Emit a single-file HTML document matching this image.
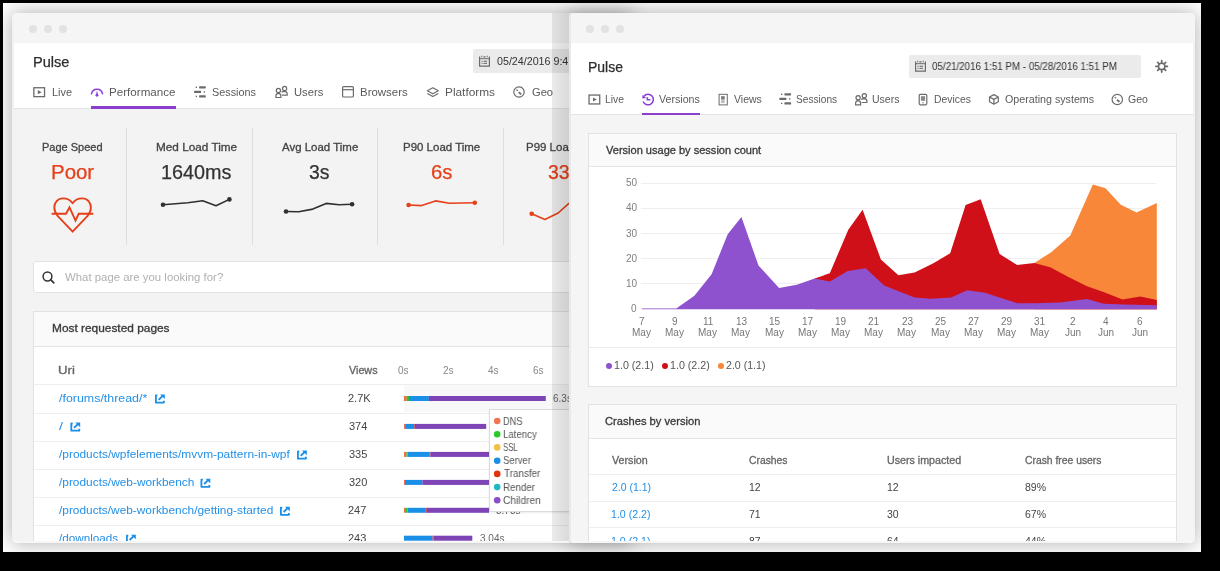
<!DOCTYPE html><html><head><meta charset="utf-8"><style>
html,body{margin:0;padding:0}
body{width:1220px;height:571px;overflow:hidden;background:#000;position:relative;font-family:"Liberation Sans",sans-serif}
.a{position:absolute;box-sizing:border-box}
.t{position:absolute;white-space:nowrap;transform-origin:0 0;will-change:transform}
.win{position:absolute;overflow:hidden;border-radius:5px;box-shadow:0 0 20px 1px rgba(0,0,0,.3)}
.dot{width:8px;height:8px;border-radius:50%;background:#e2e2e2}
.ext{width:10px;height:10px;border:1.5px solid #2a8be0;border-radius:1px}
</style></head><body>
<div class="a" style="left:3px;top:3px;width:1198px;height:549px;background:#fff"></div>
<div class="win" style="left:12px;top:13px;width:620px;height:530px;"><div class="a" style="left:-12px;top:-13px;width:1220px;height:571px"><div class="a" style="left:12px;top:13px;width:620px;height:30px;background:#f5f5f5"></div><div class="a dot" style="left:29px;top:25px"></div><div class="a dot" style="left:44px;top:25px"></div><div class="a dot" style="left:59px;top:25px"></div><div class="a" style="left:12px;top:43px;width:620px;height:65px;background:#fff"></div><div class="a" style="left:12px;top:108px;width:620px;height:1px;background:#e4e4e4"></div><div class="a" style="left:12px;top:109px;width:620px;height:433px;background:#f3f3f3"></div><div class="a" style="left:12px;top:13px;width:2px;height:530px;background:#f2f2f2"></div><div class="t" style="left:32.93px;top:54.75px;font-size:14px;line-height:14px;color:#2d2d2d;transform:scaleX(1.0414);-webkit-text-stroke:0.25px #2d2d2d;">Pulse</div><div class="t" style="left:51.53px;top:87.11px;font-size:10.5px;line-height:10.5px;color:#5a5a5a;transform:scaleX(1.0415);">Live</div><div class="t" style="left:108.57px;top:87.11px;font-size:10.5px;line-height:10.5px;color:#5a5a5a;transform:scaleX(1.1071);">Performance</div><div class="t" style="left:212.46px;top:87.11px;font-size:10.5px;line-height:10.5px;color:#5a5a5a;transform:scaleX(1.0315);">Sessions</div><div class="t" style="left:293.70px;top:87.11px;font-size:10.5px;line-height:10.5px;color:#5a5a5a;transform:scaleX(1.0671);">Users</div><div class="t" style="left:359.68px;top:87.11px;font-size:10.5px;line-height:10.5px;color:#5a5a5a;transform:scaleX(1.0911);">Browsers</div><div class="t" style="left:444.55px;top:87.11px;font-size:10.5px;line-height:10.5px;color:#5a5a5a;transform:scaleX(1.1266);">Platforms</div><div class="t" style="left:531.64px;top:87.11px;font-size:10.5px;line-height:10.5px;color:#5a5a5a;transform:scaleX(1.0582);">Geo</div><div class="a" style="left:91px;top:106px;width:85px;height:3px;background:#8a3fcf"></div><div class="a" style="left:473px;top:49px;width:200px;height:24px;background:#ebebeb;border-radius:2px"></div><div class="t" style="left:496.87px;top:55.54px;font-size:10.7px;line-height:10.7px;color:#333;">05/24/2016 9:47 AM - 05/31/2016 9:47 AM</div><svg class="a" style="left:0;top:0" width="1220" height="571"><rect x="33.85" y="87.75" width="10.7" height="8.9" fill="none" stroke="#6b6b6b" stroke-width="1.3"/><path d="M37.800000000000004 90.1 L41.6 92.19999999999999 L37.800000000000004 94.3 Z" fill="#6b6b6b"/><path d="M91.5 93.8 A5.6 5.6 0 0 1 102.5 93.8" fill="none" stroke="#8a3fd6" stroke-width="1.5" stroke-linecap="round"/><path d="M96.65 91.6 L97.35 91.6 L97.8 94.4 L96.2 94.4 Z" fill="#8a3fd6"/><circle cx="97" cy="95.3" r="1.45" fill="#8a3fd6"/><rect x="195.7" y="86.6" width="1.3" height="1.4" fill="#6b6b6b"/><rect x="199.1" y="86.19999999999999" width="6.7" height="2.2" rx="0.6" fill="#6b6b6b"/><rect x="194.1" y="90.8" width="7" height="2.2" rx="0.6" fill="#6b6b6b"/><rect x="203.7" y="91.19999999999999" width="1.3" height="1.4" fill="#6b6b6b"/><rect x="195.7" y="95.69999999999999" width="1.3" height="1.4" fill="#6b6b6b"/><rect x="199.1" y="95.3" width="6.7" height="2.2" rx="0.6" fill="#6b6b6b"/><circle cx="278.40000000000003" cy="90.39999999999999" r="2.1" fill="none" stroke="#6b6b6b" stroke-width="1.2"/><path d="M275.90000000000003 97.5 L275.90000000000003 95.69999999999999 Q276.1 93.39999999999999 278.40000000000003 93.3 Q280.7 93.39999999999999 280.90000000000003 95.69999999999999 L280.90000000000003 97.5 Z" fill="none" stroke="#6b6b6b" stroke-width="1.2"/><circle cx="284.6" cy="88.39999999999999" r="2.1" fill="none" stroke="#6b6b6b" stroke-width="1.2"/><path d="M281.5 92.1 Q282.2 91.3 284.6 91.3 Q287.1 91.39999999999999 287.2 93.69999999999999 L287.2 95.1 L281.90000000000003 95.1" fill="none" stroke="#6b6b6b" stroke-width="1.2"/><rect x="342.6" y="86.69999999999999" width="10.8" height="10.3" rx="1" fill="none" stroke="#6b6b6b" stroke-width="1.2"/><path d="M342.6 89.69999999999999 H353.4" stroke="#6b6b6b" stroke-width="1.2"/><path d="M432.8 87.8 L438.3 90.8 L432.8 93.8 L427.3 90.8 Z" fill="none" stroke="#6b6b6b" stroke-width="1.2" stroke-linejoin="round"/><path d="M427.3 93.5 L432.8 96.5 L438.3 93.5" fill="none" stroke="#6b6b6b" stroke-width="1.2" stroke-linejoin="round"/><circle cx="519" cy="92" r="5.2" fill="none" stroke="#6b6b6b" stroke-width="1.2"/><path d="M516.4 89.8 L517.8 90.8" stroke="#6b6b6b" stroke-width="1.3"/><path d="M518.7 92.2 L521.2 94.4" stroke="#6b6b6b" stroke-width="1.8"/><path d="M479.6 56.5 V66.1 H489.4 V56.5" fill="none" stroke="#6b6b6b" stroke-width="1.2"/><path d="M479.6 58.7 H489.4" stroke="#6b6b6b" stroke-width="1"/><rect x="481.3" y="55.7" width="1" height="1.6" fill="#6b6b6b"/><rect x="486.7" y="55.7" width="1" height="1.6" fill="#6b6b6b"/><rect x="483.4" y="56.3" width="2.2" height="1.2" fill="#6b6b6b"/><rect x="481.5" y="60.7" width="1.1" height="1.1" fill="#6b6b6b"/><rect x="483.5" y="60.7" width="3.6" height="1.1" fill="#6b6b6b"/><rect x="481.5" y="62.8" width="1.1" height="1.1" fill="#6b6b6b"/><rect x="483.5" y="62.8" width="3.6" height="1.1" fill="#6b6b6b"/></svg><div class="t" style="left:42.12px;top:141.76px;font-size:10.8px;line-height:10.8px;color:#444;transform:scaleX(1.0192);-webkit-text-stroke:0.3px #444;">Page Speed</div><div class="t" style="left:50.71px;top:162.88px;font-size:19.4px;line-height:19.4px;color:#e5401a;transform:scaleX(1.0539);-webkit-text-stroke:0.25px #e5401a;">Poor</div><div class="t" style="left:155.51px;top:141.76px;font-size:10.8px;line-height:10.8px;color:#444;transform:scaleX(1.0900);-webkit-text-stroke:0.3px #444;">Med Load Time</div><div class="t" style="left:160.81px;top:162.88px;font-size:19.4px;line-height:19.4px;color:#333;transform:scaleX(1.0219);-webkit-text-stroke:0.25px #333;">1640ms</div><div class="t" style="left:281.60px;top:141.76px;font-size:10.8px;line-height:10.8px;color:#444;transform:scaleX(1.0618);-webkit-text-stroke:0.3px #444;">Avg Load Time</div><div class="t" style="left:309.22px;top:162.88px;font-size:19.4px;line-height:19.4px;color:#333;-webkit-text-stroke:0.25px #333;">3s</div><div class="t" style="left:402.68px;top:141.76px;font-size:10.8px;line-height:10.8px;color:#444;transform:scaleX(1.0634);-webkit-text-stroke:0.3px #444;">P90 Load Time</div><div class="t" style="left:430.73px;top:162.88px;font-size:19.4px;line-height:19.4px;color:#e5401a;transform:scaleX(1.0469);-webkit-text-stroke:0.25px #e5401a;">6s</div><div class="t" style="left:526.08px;top:141.76px;font-size:10.8px;line-height:10.8px;color:#444;transform:scaleX(1.0634);-webkit-text-stroke:0.3px #444;">P99 Load Time</div><div class="t" style="left:548.22px;top:162.88px;font-size:19.4px;line-height:19.4px;color:#e5401a;-webkit-text-stroke:0.25px #e5401a;">33s</div><div class="a" style="left:126px;top:128px;width:1px;height:117px;background:#dedede"></div><div class="a" style="left:252px;top:128px;width:1px;height:117px;background:#dedede"></div><div class="a" style="left:377px;top:128px;width:1px;height:117px;background:#dedede"></div><div class="a" style="left:503px;top:128px;width:1px;height:117px;background:#dedede"></div><div class="a" style="left:33px;top:261px;width:600px;height:32px;background:#fff;border:1px solid #e2e2e2;border-radius:3px"></div><div class="t" style="left:65.00px;top:272.31px;font-size:10.5px;line-height:10.5px;color:#b0b0b0;transform:scaleX(1.0843);">What page are you looking for?</div><svg class="a" style="left:0;top:0" width="1220" height="571"><circle cx="47.5" cy="276.5" r="4.4" fill="none" stroke="#333" stroke-width="1.5"/><path d="M50.7 279.7 L53.8 282.8" stroke="#333" stroke-width="1.7" stroke-linecap="round"/></svg><div class="a" style="left:33px;top:311px;width:600px;height:240px;background:#fff;border:1px solid #e2e2e2"></div><div class="a" style="left:34px;top:312px;width:599px;height:34px;background:#fafafa"></div><div class="a" style="left:34px;top:346px;width:599px;height:1px;background:#e4e4e4"></div><div class="t" style="left:51.85px;top:324.48px;font-size:10.3px;line-height:10.3px;color:#3a3a3a;transform:scaleX(1.1537);-webkit-text-stroke:0.3px #3a3a3a;">Most requested pages</div><div class="t" style="left:57.95px;top:365.54px;font-size:10px;line-height:10px;color:#666;transform:scaleX(1.3158);-webkit-text-stroke:0.3px #666;">Uri</div><div class="t" style="left:348.89px;top:365.54px;font-size:10px;line-height:10px;color:#666;transform:scaleX(1.0769);-webkit-text-stroke:0.3px #666;">Views</div><div class="t" style="left:398.40px;top:365.54px;font-size:10px;line-height:10px;color:#888;">0s</div><div class="t" style="left:443.30px;top:365.54px;font-size:10px;line-height:10px;color:#888;">2s</div><div class="t" style="left:487.80px;top:365.54px;font-size:10px;line-height:10px;color:#888;">4s</div><div class="t" style="left:532.50px;top:365.54px;font-size:10px;line-height:10px;color:#888;">6s</div><div class="a" style="left:34px;top:384px;width:599px;height:1px;background:#eeeeee"></div><div class="t" style="left:59.00px;top:393.29px;font-size:11px;line-height:11px;color:#2490e6;transform:scaleX(1.1283);">/forums/thread/*</div><div class="t" style="left:348.45px;top:393.29px;font-size:11px;line-height:11px;color:#444;">2.7K</div><svg class="a" style="left:0;top:0" width="1220" height="571"><path d="M157.3 395.4 H155.9 V402.6 H163.9 V400.7" fill="none" stroke="#1a8fe8" stroke-width="1.8" stroke-linejoin="round"/><path d="M158.6 399.8 L162.6 395.9" stroke="#1a8fe8" stroke-width="1.8"/><path d="M160 394.5 H164.8 V399.1 Z" fill="#1a8fe8"/></svg><div class="a" style="left:34px;top:413px;width:599px;height:1px;background:#efefef"></div><div class="t" style="left:59.00px;top:421.39px;font-size:11px;line-height:11px;color:#2490e6;transform:scaleX(1.2987);">/</div><div class="t" style="left:348.56px;top:421.39px;font-size:11px;line-height:11px;color:#444;">374</div><svg class="a" style="left:0;top:0" width="1220" height="571"><path d="M72.7 423.49999999999994 H71.30000000000001 V430.7 H79.30000000000001 V428.79999999999995" fill="none" stroke="#1a8fe8" stroke-width="1.8" stroke-linejoin="round"/><path d="M74.0 427.9 L78.0 423.99999999999994" stroke="#1a8fe8" stroke-width="1.8"/><path d="M75.4 422.59999999999997 H80.2 V427.2 Z" fill="#1a8fe8"/></svg><div class="a" style="left:34px;top:441px;width:599px;height:1px;background:#efefef"></div><div class="t" style="left:59.00px;top:449.39px;font-size:11px;line-height:11px;color:#2490e6;transform:scaleX(1.0815);">/products/wpfelements/mvvm-pattern-in-wpf</div><div class="t" style="left:348.56px;top:449.39px;font-size:11px;line-height:11px;color:#444;">335</div><svg class="a" style="left:0;top:0" width="1220" height="571"><path d="M299.3 451.49999999999994 H297.9 V458.7 H305.9 V456.79999999999995" fill="none" stroke="#1a8fe8" stroke-width="1.8" stroke-linejoin="round"/><path d="M300.6 455.9 L304.6 451.99999999999994" stroke="#1a8fe8" stroke-width="1.8"/><path d="M302 450.59999999999997 H306.8 V455.2 Z" fill="#1a8fe8"/></svg><div class="a" style="left:34px;top:469px;width:599px;height:1px;background:#efefef"></div><div class="t" style="left:59.00px;top:477.49px;font-size:11px;line-height:11px;color:#2490e6;transform:scaleX(1.0800);">/products/web-workbench</div><div class="t" style="left:348.56px;top:477.49px;font-size:11px;line-height:11px;color:#444;">320</div><svg class="a" style="left:0;top:0" width="1220" height="571"><path d="M202.8 479.59999999999997 H201.4 V486.8 H209.4 V484.9" fill="none" stroke="#1a8fe8" stroke-width="1.8" stroke-linejoin="round"/><path d="M204.1 484.0 L208.1 480.09999999999997" stroke="#1a8fe8" stroke-width="1.8"/><path d="M205.5 478.7 H210.3 V483.3 Z" fill="#1a8fe8"/></svg><div class="a" style="left:34px;top:497px;width:599px;height:1px;background:#efefef"></div><div class="t" style="left:59.00px;top:505.49px;font-size:11px;line-height:11px;color:#2490e6;transform:scaleX(1.0783);">/products/web-workbench/getting-started</div><div class="t" style="left:348.45px;top:505.49px;font-size:11px;line-height:11px;color:#444;">247</div><svg class="a" style="left:0;top:0" width="1220" height="571"><path d="M282.3 507.59999999999997 H280.9 V514.8 H288.9 V512.9" fill="none" stroke="#1a8fe8" stroke-width="1.8" stroke-linejoin="round"/><path d="M283.6 512.0 L287.6 508.09999999999997" stroke="#1a8fe8" stroke-width="1.8"/><path d="M285 506.7 H289.8 V511.3 Z" fill="#1a8fe8"/></svg><div class="a" style="left:34px;top:525px;width:599px;height:1px;background:#efefef"></div><div class="t" style="left:59.00px;top:533.49px;font-size:11px;line-height:11px;color:#2490e6;transform:scaleX(1.0630);">/downloads</div><div class="t" style="left:348.45px;top:533.49px;font-size:11px;line-height:11px;color:#444;">243</div><svg class="a" style="left:0;top:0" width="1220" height="571"><path d="M128.3 535.6 H126.9 V542.8000000000001 H134.9 V540.9000000000001" fill="none" stroke="#1a8fe8" stroke-width="1.8" stroke-linejoin="round"/><path d="M129.6 540.0 L133.6 536.1" stroke="#1a8fe8" stroke-width="1.8"/><path d="M131 534.7 H135.8 V539.3000000000001 Z" fill="#1a8fe8"/></svg><div class="a" style="left:404px;top:385px;width:229px;height:27px;background:#f8f8f8"></div><svg class="a" style="left:0;top:0" width="1220" height="571"><path d="M72.6 203.3 C70 199.6 66.6 198.4 63 198.4 C57.6 198.4 54.3 202.6 54.3 207.6 C54.3 211 55.6 213.6 57.6 215.9 L72.6 231.7 L87.6 215.9 C89.6 213.6 90.9 211 90.9 207.6 C90.9 202.6 87.6 198.4 82.2 198.4 C78.6 198.4 75.2 199.6 72.6 203.3 Z" fill="none" stroke="#e5401a" stroke-width="1.9" stroke-linejoin="round"/><path d="M51.6 213.8 H66 L69.5 207.3 L75.5 220.6 L78.7 213.8 H93.3" fill="none" stroke="#e5401a" stroke-width="1.9" stroke-linejoin="miter"/></svg><svg class="a" style="left:0;top:0" width="1220" height="571"><polyline points="163,204.8 187.8,202.8 202.7,200.7 216,205.7 229.4,199.4" fill="none" stroke="#2f2f2f" stroke-width="1.6" stroke-linejoin="round"/><circle cx="163" cy="204.8" r="2.3" fill="#2f2f2f"/><circle cx="229.4" cy="199.4" r="2.3" fill="#2f2f2f"/><polyline points="286,211.5 298.7,211.7 312.8,209.1 326.2,203.4 339,204.7 352.1,204.2" fill="none" stroke="#2f2f2f" stroke-width="1.6" stroke-linejoin="round"/><circle cx="286" cy="211.5" r="2.3" fill="#2f2f2f"/><circle cx="352.1" cy="204.2" r="2.3" fill="#2f2f2f"/><polyline points="408.6,205 421.6,205.6 435.5,200.9 449.5,203.2 474.8,202.8" fill="none" stroke="#e5401a" stroke-width="1.6" stroke-linejoin="round"/><circle cx="408.6" cy="205" r="2.3" fill="#e5401a"/><circle cx="474.8" cy="202.8" r="2.3" fill="#e5401a"/><polyline points="531.7,213.7 544.9,219.5 558.2,213 568.6,203.7 580,196" fill="none" stroke="#e5401a" stroke-width="1.6" stroke-linejoin="round"/><circle cx="531.7" cy="213.7" r="2.3" fill="#e5401a"/></svg><svg class="a" style="left:0;top:0" width="1220" height="571"><rect x="403.9" y="396.0" width="2.9" height="5" fill="#f06d4c"/><rect x="406.8" y="396.0" width="2.2" height="5" fill="#22cc22"/><rect x="409" y="396.0" width="19.9" height="5" fill="#1a8fe8"/><rect x="428.9" y="396.0" width="1.1" height="5" fill="#d8282c"/><rect x="430" y="396.0" width="115.8" height="5" fill="#7c44b4"/><rect x="404" y="423.9" width="1.0" height="5" fill="#f06d4c"/><rect x="405" y="423.9" width="1.0" height="5" fill="#22cc22"/><rect x="406" y="423.9" width="8.4" height="5" fill="#1a8fe8"/><rect x="414.4" y="423.9" width="1.6" height="5" fill="#d8282c"/><rect x="416" y="423.9" width="70.2" height="5" fill="#7c44b4"/><rect x="404" y="451.9" width="2.5" height="5" fill="#f06d4c"/><rect x="406.5" y="451.9" width="1.0" height="5" fill="#22cc22"/><rect x="407.5" y="451.9" width="21.9" height="5" fill="#1a8fe8"/><rect x="429.4" y="451.9" width="1.1" height="5" fill="#d8282c"/><rect x="430.5" y="451.9" width="129.5" height="5" fill="#7c44b4"/><rect x="404" y="479.9" width="1.0" height="5" fill="#f06d4c"/><rect x="405" y="479.9" width="17.4" height="5" fill="#1a8fe8"/><rect x="422.4" y="479.9" width="137.6" height="5" fill="#7c44b4"/><rect x="404" y="507.8" width="2.0" height="5" fill="#f06d4c"/><rect x="406" y="507.8" width="1.5" height="5" fill="#22cc22"/><rect x="407.5" y="507.8" width="18.3" height="5" fill="#1a8fe8"/><rect x="425.8" y="507.8" width="1.0" height="5" fill="#d8282c"/><rect x="426.8" y="507.8" width="62.2" height="5" fill="#7c44b4"/><rect x="404" y="535.7" width="28.6" height="5" fill="#1a8fe8"/><rect x="432.6" y="535.7" width="0.9" height="5" fill="#d8282c"/><rect x="433.5" y="535.7" width="38.8" height="5" fill="#7c44b4"/></svg><div class="t" style="left:553.10px;top:393.54px;font-size:10px;line-height:10px;color:#666;">6.3s</div><div class="t" style="left:495.60px;top:505.74px;font-size:10px;line-height:10px;color:#666;">3.78s</div><div class="t" style="left:479.60px;top:533.53px;font-size:10px;line-height:10px;color:#666;">3.04s</div><div class="a" style="left:489px;top:409px;width:90px;height:103px;background:#fff;border:1px solid #dcdcdc;box-shadow:0 1px 2px rgba(0,0,0,.08)"></div><div class="t" style="left:502.96px;top:416.60px;font-size:10.4px;line-height:10.4px;color:#555;transform:scaleX(0.8887);">DNS</div><div class="t" style="left:502.93px;top:429.82px;font-size:10.4px;line-height:10.4px;color:#555;transform:scaleX(0.9278);">Latency</div><div class="t" style="left:503.31px;top:443.04px;font-size:10.4px;line-height:10.4px;color:#555;transform:scaleX(0.7479);">SSL</div><div class="t" style="left:503.23px;top:456.26px;font-size:10.4px;line-height:10.4px;color:#555;transform:scaleX(0.9115);">Server</div><div class="t" style="left:503.50px;top:469.48px;font-size:10.4px;line-height:10.4px;color:#555;transform:scaleX(0.9510);">Transfer</div><div class="t" style="left:502.92px;top:482.70px;font-size:10.4px;line-height:10.4px;color:#555;transform:scaleX(0.9435);">Render</div><div class="t" style="left:503.19px;top:495.92px;font-size:10.4px;line-height:10.4px;color:#555;transform:scaleX(0.9749);">Children</div><svg class="a" style="left:0;top:0" width="1220" height="571"><circle cx="497.2" cy="421.0" r="3.3" fill="#f07850"/><circle cx="497.2" cy="434.2" r="3.3" fill="#2cc82c"/><circle cx="497.2" cy="447.4" r="3.3" fill="#f2c044"/><circle cx="497.2" cy="460.7" r="3.3" fill="#1a8fe8"/><circle cx="497.2" cy="473.9" r="3.3" fill="#e2330e"/><circle cx="497.2" cy="487.1" r="3.3" fill="#1fb8c8"/><circle cx="497.2" cy="500.3" r="3.3" fill="#8a4cc8"/></svg><div class="a" style="left:12px;top:541px;width:620px;height:2px;background:#f6f6f6"></div></div></div><div class="a" style="left:552px;top:13px;width:17px;height:528px;background:linear-gradient(to right,rgba(0,0,0,.08),rgba(0,0,0,.145))"></div><div class="win" style="left:569px;top:13px;width:626px;height:530px;clip-path:polygon(-20px -40px,calc(100% + 40px) -40px,calc(100% + 40px) calc(100% + 40px),-20px calc(100% + 40px),-20px 100%,0 100%,0 0,-20px 0)"><div class="a" style="left:-569px;top:-13px;width:1220px;height:571px"><div class="a" style="left:569px;top:13px;width:626px;height:30px;background:#f5f5f5"></div><div class="a dot" style="left:586px;top:25px"></div><div class="a dot" style="left:601px;top:25px"></div><div class="a dot" style="left:616px;top:25px"></div><div class="a" style="left:569px;top:43px;width:626px;height:71px;background:#fff"></div><div class="a" style="left:569px;top:114px;width:626px;height:1px;background:#e4e4e4"></div><div class="a" style="left:569px;top:115px;width:626px;height:427px;background:#f5f5f5"></div><div class="a" style="left:569px;top:13px;width:2px;height:529px;background:#e9e9e9"></div><div class="a" style="left:1193px;top:43px;width:2px;height:500px;background:#f3f3f3"></div><div class="t" style="left:587.89px;top:60.35px;font-size:14px;line-height:14px;color:#2d2d2d;transform:scaleX(0.9904);-webkit-text-stroke:0.25px #2d2d2d;">Pulse</div><div class="t" style="left:605.27px;top:94.53px;font-size:10px;line-height:10px;color:#5a5a5a;transform:scaleX(1.0351);">Live</div><div class="t" style="left:659.39px;top:94.53px;font-size:10px;line-height:10px;color:#5a5a5a;transform:scaleX(1.0633);">Versions</div><div class="t" style="left:734.39px;top:94.53px;font-size:10px;line-height:10px;color:#5a5a5a;transform:scaleX(1.0500);">Views</div><div class="t" style="left:796.39px;top:94.53px;font-size:10px;line-height:10px;color:#5a5a5a;transform:scaleX(1.0126);">Sessions</div><div class="t" style="left:872.16px;top:94.53px;font-size:10px;line-height:10px;color:#5a5a5a;transform:scaleX(1.0522);">Users</div><div class="t" style="left:934.17px;top:94.53px;font-size:10px;line-height:10px;color:#5a5a5a;transform:scaleX(1.0349);">Devices</div><div class="t" style="left:1005.27px;top:94.53px;font-size:10px;line-height:10px;color:#5a5a5a;transform:scaleX(1.0691);">Operating systems</div><div class="t" style="left:1128.47px;top:94.53px;font-size:10px;line-height:10px;color:#5a5a5a;transform:scaleX(1.0556);">Geo</div><div class="a" style="left:642px;top:113px;width:58px;height:2px;background:#8a3fcf"></div><div class="a" style="left:909px;top:55px;width:232px;height:23px;background:#ebebeb;border-radius:2px"></div><div class="t" style="left:931.91px;top:62.13px;font-size:10px;line-height:10px;color:#333;transform:scaleX(0.9782);">05/21/2016 1:51 PM - 05/28/2016 1:51 PM</div><svg class="a" style="left:0;top:0" width="1220" height="571"><rect x="589.05" y="95.05000000000001" width="10.7" height="8.9" fill="none" stroke="#6b6b6b" stroke-width="1.3"/><path d="M593.0 97.4 L596.8 99.5 L593.0 101.60000000000001 Z" fill="#6b6b6b"/><path d="M643.0999999999999 101.4 A5.3 5.3 0 1 0 643.9 96.2" fill="none" stroke="#8a3fd6" stroke-width="1.5"/><path d="M642.4 94.9 L642.4 98.5 L646.1999999999999 97.9 Z" fill="#8a3fd6"/><path d="M647.3 97.3 V99.7 H650.4" fill="none" stroke="#8a3fd6" stroke-width="1.5"/><rect x="719.1" y="94.3" width="8.2" height="10.6" fill="none" stroke="#6b6b6b" stroke-width="1"/><rect x="721.1" y="96.2" width="3.6" height="3.4" fill="#777"/><rect x="721.1" y="100.2" width="3.6" height="2.9" fill="#bbb"/><rect x="781.0" y="93.6" width="1.3" height="1.4" fill="#6b6b6b"/><rect x="784.4" y="93.19999999999999" width="6.7" height="2.2" rx="0.6" fill="#6b6b6b"/><rect x="779.4" y="97.8" width="7" height="2.2" rx="0.6" fill="#6b6b6b"/><rect x="789.0" y="98.19999999999999" width="1.3" height="1.4" fill="#6b6b6b"/><rect x="781.0" y="102.69999999999999" width="1.3" height="1.4" fill="#6b6b6b"/><rect x="784.4" y="102.3" width="6.7" height="2.2" rx="0.6" fill="#6b6b6b"/><circle cx="858.1" cy="97.8" r="2.1" fill="none" stroke="#6b6b6b" stroke-width="1.2"/><path d="M855.6 104.9 L855.6 103.1 Q855.8 100.8 858.1 100.7 Q860.4 100.8 860.6 103.1 L860.6 104.9 Z" fill="none" stroke="#6b6b6b" stroke-width="1.2"/><circle cx="864.3" cy="95.8" r="2.1" fill="none" stroke="#6b6b6b" stroke-width="1.2"/><path d="M861.2 99.5 Q861.9 98.7 864.3 98.7 Q866.8 98.8 866.9 101.1 L866.9 102.5 L861.6 102.5" fill="none" stroke="#6b6b6b" stroke-width="1.2"/><rect x="919.2" y="94.39999999999999" width="7.6" height="10.4" rx="1.2" fill="none" stroke="#6b6b6b" stroke-width="1.2"/><rect x="920.9" y="96.2" width="4.2" height="4.6" fill="#888"/><rect x="922.3000000000001" y="102.3" width="1.4" height="1" fill="#6b6b6b"/><path d="M993.9 94.6 L998.3 97.0 L998.3 101.8 L993.9 104.2 L989.5 101.8 L989.5 97.0 Z M989.5 97.0 L993.9 99.39999999999999 L998.3 97.0 M993.9 99.39999999999999 V104.2" fill="none" stroke="#6b6b6b" stroke-width="1.2" stroke-linejoin="round"/><circle cx="1117.3" cy="99.5" r="5.2" fill="none" stroke="#6b6b6b" stroke-width="1.2"/><path d="M1114.7 97.3 L1116.1 98.3" stroke="#6b6b6b" stroke-width="1.3"/><path d="M1117.0 99.7 L1119.5 101.9" stroke="#6b6b6b" stroke-width="1.8"/><path d="M915.6 61.5 V71.1 H925.4 V61.5" fill="none" stroke="#6b6b6b" stroke-width="1.2"/><path d="M915.6 63.7 H925.4" stroke="#6b6b6b" stroke-width="1"/><rect x="917.3" y="60.7" width="1" height="1.6" fill="#6b6b6b"/><rect x="922.7" y="60.7" width="1" height="1.6" fill="#6b6b6b"/><rect x="919.4" y="61.3" width="2.2" height="1.2" fill="#6b6b6b"/><rect x="917.5" y="65.7" width="1.1" height="1.1" fill="#6b6b6b"/><rect x="919.5" y="65.7" width="3.6" height="1.1" fill="#6b6b6b"/><rect x="917.5" y="67.8" width="1.1" height="1.1" fill="#6b6b6b"/><rect x="919.5" y="67.8" width="3.6" height="1.1" fill="#6b6b6b"/><circle cx="1161.7" cy="66.4" r="3.2" fill="none" stroke="#6b6b6b" stroke-width="1.5"/><path d="M1165.10 66.40 L1167.40 66.40 M1164.10 68.80 L1165.73 70.43 M1161.70 69.80 L1161.70 72.10 M1159.30 68.80 L1157.67 70.43 M1158.30 66.40 L1156.00 66.40 M1159.30 64.00 L1157.67 62.37 M1161.70 63.00 L1161.70 60.70 M1164.10 64.00 L1165.73 62.37 " stroke="#6b6b6b" stroke-width="1.7" stroke-linecap="round"/></svg><div class="a" style="left:588px;top:133px;width:589px;height:254px;background:#fff;border:1px solid #e2e2e2"></div><div class="a" style="left:589px;top:134px;width:587px;height:32px;background:#fafafa"></div><div class="a" style="left:589px;top:166px;width:587px;height:1px;background:#e4e4e4"></div><div class="t" style="left:606.39px;top:144.61px;font-size:10.5px;line-height:10.5px;color:#3a3a3a;transform:scaleX(1.0507);-webkit-text-stroke:0.3px #3a3a3a;">Version usage by session count</div><div class="a" style="left:589px;top:347px;width:587px;height:1px;background:#ececec"></div><div class="a" style="left:641px;top:183px;width:515px;height:1px;background:#efefef"></div><div class="t" style="left:625.50px;top:178.33px;font-size:10px;line-height:10px;color:#808080;">50</div><div class="a" style="left:641px;top:208px;width:515px;height:1px;background:#efefef"></div><div class="t" style="left:625.50px;top:203.48px;font-size:10px;line-height:10px;color:#808080;">40</div><div class="a" style="left:641px;top:233px;width:515px;height:1px;background:#efefef"></div><div class="t" style="left:625.50px;top:228.63px;font-size:10px;line-height:10px;color:#808080;">30</div><div class="a" style="left:641px;top:258px;width:515px;height:1px;background:#efefef"></div><div class="t" style="left:625.50px;top:253.78px;font-size:10px;line-height:10px;color:#808080;">20</div><div class="a" style="left:641px;top:283px;width:515px;height:1px;background:#efefef"></div><div class="t" style="left:625.50px;top:278.94px;font-size:10px;line-height:10px;color:#808080;">10</div><div class="a" style="left:641px;top:308px;width:515px;height:1px;background:#efefef"></div><div class="t" style="left:631.10px;top:304.09px;font-size:10px;line-height:10px;color:#808080;">0</div><svg class="a" style="left:0;top:0" width="1220" height="571" viewBox="0 0 1220 571"><polygon fill="#f8873a" points="1034.3,262.9 1051.2,252.2 1070.3,235.5 1092.8,184.5 1105.5,188.3 1120.8,204.8 1136.5,212.4 1156.8,203.0 1156.8,309.2 1034.3,309.2"/><polygon fill="#cf1018" points="814.7,278.5 829.8,273.2 848.3,229.7 862.6,209.7 880.9,259.5 898.4,275.3 914.6,272.4 933.4,263.3 950.2,253.2 965.6,204.9 980.7,199.2 999.6,253.9 1017.1,265.0 1034.3,262.9 1050.2,267.3 1067.9,276.7 1087.0,286.3 1103.5,291.9 1122.5,299.5 1140.3,296.5 1156.8,300.0 1156.8,309.2 814.7,309.2"/><polygon fill="#8e52cf" points="642,309.2 642.0,308.4 676.3,308.4 694.4,295.7 711.6,274.2 727.7,234.3 741.4,217.1 758.5,265.5 779.1,288.1 796.8,284.8 814.7,278.5 829.8,281.6 847.7,271.1 865.8,268.2 884.1,285.4 914.6,297.6 930.3,298.7 951.3,297.4 967.1,290.2 984.9,292.8 1017.5,303.3 1034.3,303.3 1060.3,302.6 1087.0,299.0 1103.5,303.8 1123.8,304.6 1156.8,305.3 1156.8,309.2"/></svg><div class="t" style="left:639.10px;top:316.54px;font-size:10px;line-height:10px;color:#777;">7</div><div class="t" style="left:632.05px;top:327.54px;font-size:10px;line-height:10px;color:#777;">May</div><div class="t" style="left:672.00px;top:316.54px;font-size:10px;line-height:10px;color:#777;">9</div><div class="t" style="left:664.95px;top:327.54px;font-size:10px;line-height:10px;color:#777;">May</div><div class="t" style="left:702.65px;top:316.54px;font-size:10px;line-height:10px;color:#777;">11</div><div class="t" style="left:698.15px;top:327.54px;font-size:10px;line-height:10px;color:#777;">May</div><div class="t" style="left:735.55px;top:316.54px;font-size:10px;line-height:10px;color:#777;">13</div><div class="t" style="left:731.45px;top:327.54px;font-size:10px;line-height:10px;color:#777;">May</div><div class="t" style="left:768.80px;top:316.54px;font-size:10px;line-height:10px;color:#777;">15</div><div class="t" style="left:764.75px;top:327.54px;font-size:10px;line-height:10px;color:#777;">May</div><div class="t" style="left:802.25px;top:316.54px;font-size:10px;line-height:10px;color:#777;">17</div><div class="t" style="left:798.15px;top:327.54px;font-size:10px;line-height:10px;color:#777;">May</div><div class="t" style="left:835.25px;top:316.54px;font-size:10px;line-height:10px;color:#777;">19</div><div class="t" style="left:831.15px;top:327.54px;font-size:10px;line-height:10px;color:#777;">May</div><div class="t" style="left:868.10px;top:316.54px;font-size:10px;line-height:10px;color:#777;">21</div><div class="t" style="left:863.85px;top:327.54px;font-size:10px;line-height:10px;color:#777;">May</div><div class="t" style="left:901.70px;top:316.54px;font-size:10px;line-height:10px;color:#777;">23</div><div class="t" style="left:897.45px;top:327.54px;font-size:10px;line-height:10px;color:#777;">May</div><div class="t" style="left:934.85px;top:316.54px;font-size:10px;line-height:10px;color:#777;">25</div><div class="t" style="left:930.65px;top:327.54px;font-size:10px;line-height:10px;color:#777;">May</div><div class="t" style="left:968.00px;top:316.54px;font-size:10px;line-height:10px;color:#777;">27</div><div class="t" style="left:963.75px;top:327.54px;font-size:10px;line-height:10px;color:#777;">May</div><div class="t" style="left:1001.10px;top:316.54px;font-size:10px;line-height:10px;color:#777;">29</div><div class="t" style="left:996.85px;top:327.54px;font-size:10px;line-height:10px;color:#777;">May</div><div class="t" style="left:1034.45px;top:316.54px;font-size:10px;line-height:10px;color:#777;">31</div><div class="t" style="left:1030.15px;top:327.54px;font-size:10px;line-height:10px;color:#777;">May</div><div class="t" style="left:1070.20px;top:316.54px;font-size:10px;line-height:10px;color:#777;">2</div><div class="t" style="left:1065.15px;top:327.54px;font-size:10px;line-height:10px;color:#777;">Jun</div><div class="t" style="left:1103.45px;top:316.54px;font-size:10px;line-height:10px;color:#777;">4</div><div class="t" style="left:1098.35px;top:327.54px;font-size:10px;line-height:10px;color:#777;">Jun</div><div class="t" style="left:1136.70px;top:316.54px;font-size:10px;line-height:10px;color:#777;">6</div><div class="t" style="left:1131.65px;top:327.54px;font-size:10px;line-height:10px;color:#777;">Jun</div><div class="a" style="left:606.4px;top:363px;width:6px;height:6px;border-radius:50%;background:#8e52cf"></div><div class="t" style="left:614.45px;top:361.04px;font-size:10px;line-height:10px;color:#555;transform:scaleX(1.0670);">1.0 (2.1)</div><div class="a" style="left:661.6px;top:363px;width:6px;height:6px;border-radius:50%;background:#cf1018"></div><div class="t" style="left:670.15px;top:361.04px;font-size:10px;line-height:10px;color:#555;transform:scaleX(1.0670);">1.0 (2.2)</div><div class="a" style="left:717.5px;top:363px;width:6px;height:6px;border-radius:50%;background:#f8873a"></div><div class="t" style="left:726.47px;top:361.04px;font-size:10px;line-height:10px;color:#555;transform:scaleX(1.0582);">2.0 (1.1)</div><div class="a" style="left:588px;top:404px;width:589px;height:200px;background:#fff;border:1px solid #e2e2e2"></div><div class="a" style="left:589px;top:405px;width:587px;height:33px;background:#fafafa"></div><div class="a" style="left:589px;top:438px;width:587px;height:1px;background:#e4e4e4"></div><div class="t" style="left:605.44px;top:415.71px;font-size:10.5px;line-height:10.5px;color:#3a3a3a;transform:scaleX(1.0607);-webkit-text-stroke:0.3px #3a3a3a;">Crashes by version</div><div class="t" style="left:612.19px;top:456.14px;font-size:10px;line-height:10px;color:#666;transform:scaleX(1.0736);-webkit-text-stroke:0.3px #666;">Version</div><div class="t" style="left:748.98px;top:456.14px;font-size:10px;line-height:10px;color:#666;transform:scaleX(1.0331);-webkit-text-stroke:0.3px #666;">Crashes</div><div class="t" style="left:886.85px;top:456.14px;font-size:10px;line-height:10px;color:#666;transform:scaleX(1.0676);-webkit-text-stroke:0.3px #666;">Users impacted</div><div class="t" style="left:1024.78px;top:456.14px;font-size:10px;line-height:10px;color:#666;transform:scaleX(1.0342);-webkit-text-stroke:0.3px #666;">Crash free users</div><div class="a" style="left:589px;top:474px;width:587px;height:1px;background:#eeeeee"></div><div class="t" style="left:611.77px;top:482.11px;font-size:10.5px;line-height:10.5px;color:#2490e6;">2.0 (1.1)</div><div class="t" style="left:748.66px;top:482.11px;font-size:10.5px;line-height:10.5px;color:#444;">12</div><div class="t" style="left:886.86px;top:482.11px;font-size:10.5px;line-height:10.5px;color:#444;">12</div><div class="t" style="left:1024.88px;top:482.11px;font-size:10.5px;line-height:10.5px;color:#444;">89%</div><div class="a" style="left:589px;top:501px;width:587px;height:1px;background:#efefef"></div><div class="t" style="left:611.45px;top:509.01px;font-size:10.5px;line-height:10.5px;color:#2490e6;transform:scaleX(1.0109);">1.0 (2.2)</div><div class="t" style="left:748.98px;top:509.01px;font-size:10.5px;line-height:10.5px;color:#444;">71</div><div class="t" style="left:887.28px;top:509.01px;font-size:10.5px;line-height:10.5px;color:#444;">30</div><div class="t" style="left:1024.77px;top:509.01px;font-size:10.5px;line-height:10.5px;color:#444;">67%</div><div class="a" style="left:589px;top:527px;width:587px;height:1px;background:#efefef"></div><div class="t" style="left:611.45px;top:535.91px;font-size:10.5px;line-height:10.5px;color:#2490e6;transform:scaleX(1.0109);">1.0 (2.1)</div><div class="t" style="left:749.08px;top:535.91px;font-size:10.5px;line-height:10.5px;color:#444;">87</div><div class="t" style="left:887.18px;top:535.91px;font-size:10.5px;line-height:10.5px;color:#444;">64</div><div class="t" style="left:1025.09px;top:535.91px;font-size:10.5px;line-height:10.5px;color:#444;">44%</div><div class="a" style="left:569px;top:541px;width:626px;height:2px;background:#f6f6f6"></div></div></div>
</body></html>
